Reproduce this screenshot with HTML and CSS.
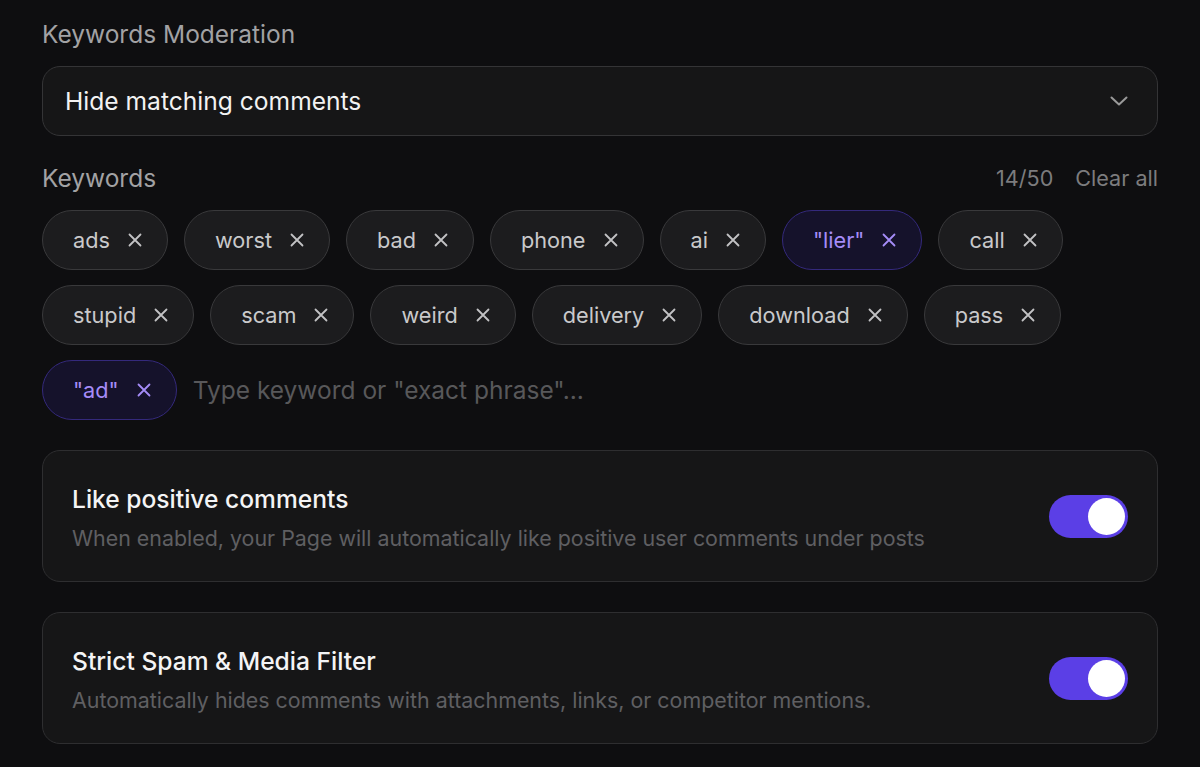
FILE: index.html
```html
<!DOCTYPE html>
<html lang="en">
<head>
<meta charset="utf-8">
<title>Keywords Moderation</title>
<link rel="stylesheet" href="styles.css">
</head>
<body>
<main class="page">
  <h2 class="section-label">Keywords Moderation</h2>
  <div class="select">
    <span class="select-value">Hide matching comments</span>
    <svg class="chevron" width="18" height="10" viewBox="0 0 18 10"><path d="M1.5 1.5 L9 8.5 L16.5 1.5" fill="none" stroke="#9a9a9a" stroke-width="2" stroke-linecap="round" stroke-linejoin="round"/></svg>
  </div>

  <div class="kw-header">
    <span class="section-label">Keywords</span>
    <div class="kw-meta">
      <span class="count">14/50</span>
      <span class="clear">Clear all</span>
    </div>
  </div>

  <div class="chips">
    <span class="chip">ads<svg class="x" viewBox="0 0 14 14"><path d="M1.5 1.5 L12.5 12.5 M12.5 1.5 L1.5 12.5"/></svg></span>
    <span class="chip">worst<svg class="x" viewBox="0 0 14 14"><path d="M1.5 1.5 L12.5 12.5 M12.5 1.5 L1.5 12.5"/></svg></span>
    <span class="chip">bad<svg class="x" viewBox="0 0 14 14"><path d="M1.5 1.5 L12.5 12.5 M12.5 1.5 L1.5 12.5"/></svg></span>
    <span class="chip">phone<svg class="x" viewBox="0 0 14 14"><path d="M1.5 1.5 L12.5 12.5 M12.5 1.5 L1.5 12.5"/></svg></span>
    <span class="chip">ai<svg class="x" viewBox="0 0 14 14"><path d="M1.5 1.5 L12.5 12.5 M12.5 1.5 L1.5 12.5"/></svg></span>
    <span class="chip exact">"lier"<svg class="x" viewBox="0 0 14 14"><path d="M1.5 1.5 L12.5 12.5 M12.5 1.5 L1.5 12.5"/></svg></span>
    <span class="chip">call<svg class="x" viewBox="0 0 14 14"><path d="M1.5 1.5 L12.5 12.5 M12.5 1.5 L1.5 12.5"/></svg></span>
    <span class="chip">stupid<svg class="x" viewBox="0 0 14 14"><path d="M1.5 1.5 L12.5 12.5 M12.5 1.5 L1.5 12.5"/></svg></span>
    <span class="chip">scam<svg class="x" viewBox="0 0 14 14"><path d="M1.5 1.5 L12.5 12.5 M12.5 1.5 L1.5 12.5"/></svg></span>
    <span class="chip">weird<svg class="x" viewBox="0 0 14 14"><path d="M1.5 1.5 L12.5 12.5 M12.5 1.5 L1.5 12.5"/></svg></span>
    <span class="chip">delivery<svg class="x" viewBox="0 0 14 14"><path d="M1.5 1.5 L12.5 12.5 M12.5 1.5 L1.5 12.5"/></svg></span>
    <span class="chip">download<svg class="x" viewBox="0 0 14 14"><path d="M1.5 1.5 L12.5 12.5 M12.5 1.5 L1.5 12.5"/></svg></span>
    <span class="chip">pass<svg class="x" viewBox="0 0 14 14"><path d="M1.5 1.5 L12.5 12.5 M12.5 1.5 L1.5 12.5"/></svg></span>
    <span class="chip exact">"ad"<svg class="x" viewBox="0 0 14 14"><path d="M1.5 1.5 L12.5 12.5 M12.5 1.5 L1.5 12.5"/></svg></span>
    <input class="kw-input" type="text" placeholder="Type keyword or &quot;exact phrase&quot;...">
  </div>

  <section class="card">
    <div class="card-text">
      <h3 class="card-title">Like positive comments</h3>
      <p class="card-desc">When enabled, your Page will automatically like positive user comments under posts</p>
    </div>
    <span class="toggle on"><span class="knob"></span></span>
  </section>

  <section class="card">
    <div class="card-text">
      <h3 class="card-title">Strict Spam &amp; Media Filter</h3>
      <p class="card-desc">Automatically hides comments with attachments, links, or competitor mentions.</p>
    </div>
    <span class="toggle on"><span class="knob"></span></span>
  </section>
</main>
</body>
</html>
```

FILE: styles.css
```css
* { box-sizing: border-box; }
html, body {
  margin: 0;
  background: #0e0e10;
  font-family: Inter, "Noto Sans", "Liberation Sans", sans-serif;
  color: #eaeaea;
}
.page {
  width: 1200px;
  padding: 17px 42px 0;
  display: flex;
  flex-direction: column;
}
.section-label {
  margin: 0;
  font-size: 24.5px;
  font-weight: 400;
  line-height: 34px;
  color: #a2a2a4;
}
.select {
  margin-top: 15px;
  height: 70px;
  border: 1.5px solid #343436;
  border-radius: 18px;
  background: #161617;
  display: flex;
  align-items: center;
  justify-content: space-between;
  padding: 0 29px 0 22px;
}
.select-value {
  font-size: 24.6px;
  color: #f2f2f2;
}
.chevron { display: block; }
.kw-header {
  margin-top: 25px;
  display: flex;
  justify-content: space-between;
  align-items: center;
}
.kw-meta {
  display: flex;
  gap: 22px;
  font-size: 21.6px;
  color: #7c7c7e;
}
.chips {
  margin-top: 15px;
  display: flex;
  flex-wrap: wrap;
  gap: 15px 16px;
  align-items: center;
}
.chip {
  height: 60px;
  display: inline-flex;
  align-items: center;
  gap: 18px;
  padding: 0 25px 0 30px;
  border: 1.5px solid #39393b;
  border-radius: 30px;
  background: #1c1c1e;
  font-size: 21.7px;
  color: #c9c9cb;
}
.chip .x {
  width: 14px;
  height: 14px;
  fill: none;
  stroke: #c2c2c4;
  stroke-width: 1.8;
  stroke-linecap: round;
}
.chip.exact {
  background: #15122b;
  border-color: #34297c;
  color: #a58cf8;
}
.chip.exact .x { stroke: #a58cf8; }
.kw-input {
  flex: 1;
  min-width: 300px;
  height: 60px;
  border: 0;
  outline: 0;
  background: transparent;
  font-family: inherit;
  font-size: 24.5px;
  color: #eaeaea;
  padding: 0;
}
.kw-input::placeholder { color: #58585a; }
.card {
  margin-top: 30px;
  height: 132px;
  border: 1.5px solid #2e2e30;
  border-radius: 18px;
  background: #161617;
  display: flex;
  align-items: center;
  justify-content: space-between;
  padding: 0 29px 0 29px;
}
.card-text { display: flex; flex-direction: column; gap: 8px; padding-top: 3px; }
.card-title {
  margin: 0;
  font-size: 24.6px;
  font-weight: 500;
  line-height: 32px;
  color: #f4f4f5;
}
.card-desc {
  margin: 0;
  font-size: 21.4px;
  line-height: 30px;
  color: #5f5f62;
}
.toggle {
  width: 79px;
  height: 43px;
  border-radius: 22px;
  background: #5b3fe6;
  display: flex;
  align-items: center;
  justify-content: flex-end;
  padding: 0 3px;
}
.knob {
  width: 37px;
  height: 37px;
  border-radius: 50%;
  background: #fff;
}
```
